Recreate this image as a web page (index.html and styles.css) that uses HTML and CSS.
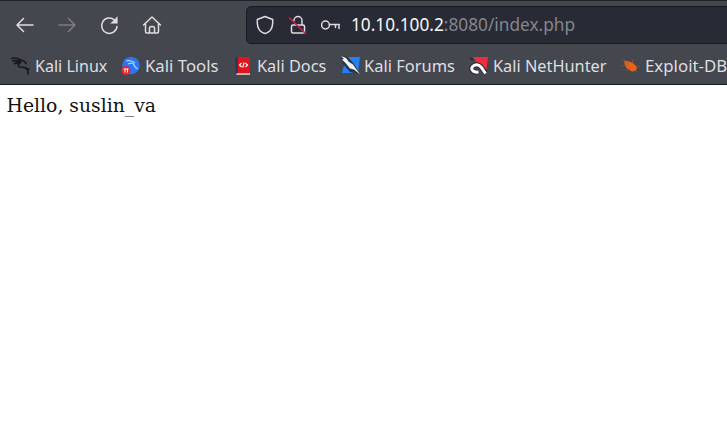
FILE: index.html
```html
<!DOCTYPE html>
<html lang="en">
<head>
<meta charset="utf-8">
<title>index.php</title>
<link rel="stylesheet" href="styles.css">
</head>
<body>
<header class="chrome">
  <div class="toolbar">
    <nav class="nav">
      <svg class="icon" viewBox="0 0 20 20"><path d="M18 10H2M8.500 3.500L2 10l6.500 6.500"/></svg>
      <svg class="icon disabled" viewBox="0 0 20 20"><path d="M2 10h16M11.500 3.500L18 10l-6.500 6.500"/></svg>
      <svg class="icon" viewBox="0 0 20 20"><path d="M15.500 5A7.700 7.700 0 1 0 18 11.500"/><path class="solid" d="M18.300 2v6.300H12z"/></svg>
      <svg class="icon shifted" viewBox="0 0 20 20"><path d="M1.500 10L10 2l8.500 8M3.500 8.500v8.300q0 1.200 1.200 1.200h10.600q1.200 0 1.200-1.200V8.500M7.500 18v-5q0-1.500 2.500-1.500t2.500 1.500v5"/></svg>
    </nav>
    <div class="urlbar">
      <svg class="icon" viewBox="0 0 20 20"><path d="M10 1.500l7.700 3q.5 8-3 11.500Q12.500 18 10 18.600 7.500 18 5.300 16q-3.500-3.500-3-11.500z"/></svg>
      <svg class="icon" viewBox="0 0 20 20"><rect x="3.500" y="10" width="13" height="8" rx="1.500"/><path d="M6 5.500a4 4 0 0 1 8 0V10"/><path class="slash" d="M1.500 3l16 15.500"/></svg>
      <svg class="icon" viewBox="0 0 20 20"><circle cx="4.500" cy="10" r="3.900"/><path d="M8.500 9.500h9.800M14.500 9.500v3M18 9.500v4"/></svg>
      <span class="url"><b>10.10.100.2</b>:8080/index.php</span>
    </div>
  </div>
  <nav class="bookmarks">
    <a class="w1"><svg class="fav" viewBox="0 0 20 20"><path class="dragon" d="M0 2.500q5-1.500 9 1l4.500 2M1 5q5-1 9 1M3 8q3-2 6-1Q5.500 9 8.500 11l5 .5q4 1.500 3.500 7M13 11.500l5.500 2M13 5l2.500 3"/></svg><span>Kali Linux</span></a>
    <a class="w2"><svg class="fav" viewBox="0 0 20 20"><circle cx="10" cy="9.500" r="8.700" fill="#2777f5"/><path class="swirl" d="M5 5q5-1.500 9 2M7 8q5-2 6 1t4 4"/><circle cx="5" cy="14.500" r="4.500" fill="#e32632"/><path d="M2.500 13h5M4 13v3.500M6.500 13v3.500" stroke="#fff"/></svg><span>Kali Tools</span></a>
    <a class="w3"><svg class="fav" viewBox="0 0 20 20"><path d="M0 1h4v17H1z" fill="#34335e"/><path d="M3 1h12v16H3z" fill="#e0141b"/><path d="M2 17h13v2H1z" fill="#c4b4b7"/><path d="M6.500 7L4.500 9l2 2M10.500 7l2 2-2 2M9.200 6.500l-1.500 5" stroke="#fff" stroke-width="1.200" fill="none"/></svg><span>Kali Docs</span></a>
    <a class="w4"><svg class="fav" viewBox="0 0 20 20"><path d="M5 1h14l-2 16H1z" fill="#2182f2"/><path d="M0 0l7 1 6 7 3 5 2 5-9-2L2 8z" fill="#2b3448"/><path d="M0 0l5 2 3 4 4 2.500 2 3 5 7-6-5-4-1-4-5-4-4 2-.5z" fill="#f6f4ee"/></svg><span>Kali Forums</span></a>
    <a class="w5"><svg class="fav" viewBox="0 0 20 20"><path d="M4 1h15l-2 15-4-3z" fill="#f12c3c"/><path class="hook-edge" d="M16.500 17L12 11Q9 7.500 5 9.500q-4 2.500-1 5.500 2 1.500 5.500 1"/><path class="hook" d="M16.500 17.500L12 11Q9 7.500 5 9.500q-4 2.500-1 5.500 2 1.500 5.500 1"/><path d="M0 1l5 2-2 2z" fill="#242832"/></svg><span>Kali NetHunter</span></a>
    <a class="w6"><svg class="fav" viewBox="0 0 20 20"><path d="M3 4.500l5 1 4 1.500 3 3 1 2.500-2 2.500-3 .5-5-3-2-3z" fill="#eb6217"/><path d="M1 4l7 4M11 3l1 5M0 10l8-1M5 15l5-3M15 10l4 .5M13 14l3 2" stroke="#a65330" stroke-width=".6"/></svg><span>Exploit-DB</span></a>
  </nav>
</header>
<main class="page">Hello, suslin_va</main>
</body>
</html>
```
FILE: styles.css
```css
* { box-sizing: border-box; }
body { margin: 0; width: 727px; height: 439px; overflow: hidden; background: #fff; }
.chrome { height: 85px; background: #44474e; border-top: 1px solid #20222b; border-bottom: 1px solid #17191f; overflow: hidden; }
.toolbar { display: flex; height: 47px; align-items: center; }
.nav { display: flex; flex: none; width: 246px; padding-left: 15px; gap: 22px; }
.icon { width: 20px; height: 20px; flex: none; fill: none; stroke: #dededf; stroke-width: 1.5; stroke-linecap: round; stroke-linejoin: round; }
.shifted { margin-left: .5px; }
.disabled { stroke: #7b7d82; }
.solid { fill: #dededf; stroke-width: .5; }
.slash { stroke: #d51e49; stroke-width: 1.6; }
.urlbar { display: flex; align-items: center; flex: none; width: 490px; height: 38px; padding-left: 8px; gap: 13px; border: 1px solid #191b23; border-radius: 5px; background: #282a35; }
.url { font: 17.25px/24px "Noto Sans", sans-serif; color: #85868c; white-space: nowrap; margin-left: -3px; }
.url b { font-weight: 400; color: #f6f6f7; }
.bookmarks { display: flex; height: 35px; padding-left: 11px; }
.bookmarks a { display: flex; align-items: center; flex: none; gap: 4px; color: #dedfe2; font: 17px/24px "Noto Sans", sans-serif; white-space: nowrap; }
.bookmarks span { transform: scaleX(.96); transform-origin: left; }
.bookmarks .w1 span { transform: scaleX(.945); }
.bookmarks .w2 span { transform: scaleX(.985); }
.bookmarks .w4 span { transform: scaleX(.968); }
.bookmarks .w6 span { transform: scaleX(.99); }
.fav { width: 20px; height: 20px; flex: none; }
.w1 { width: 110px; }
.w2 { width: 114px; }
.bookmarks .w3 { width: 106px; gap: 2px; }
.bookmarks .w4 { width: 128px; gap: 3px; }
.w5 { width: 152px; }
.w6 { width: 120px; }
.dragon { fill: none; stroke: #15171b; stroke-width: 1.6; }
.swirl { fill: none; stroke: #b9d5ff; stroke-width: 1.2; }
.hook-edge { fill: none; stroke: #262a33; stroke-width: 5; }
.hook { fill: none; stroke: #fff; stroke-width: 3; }
.page { padding: 9px 6.6px; font: 18.8px/24px "DejaVu Serif", serif; color: #111; }
```
